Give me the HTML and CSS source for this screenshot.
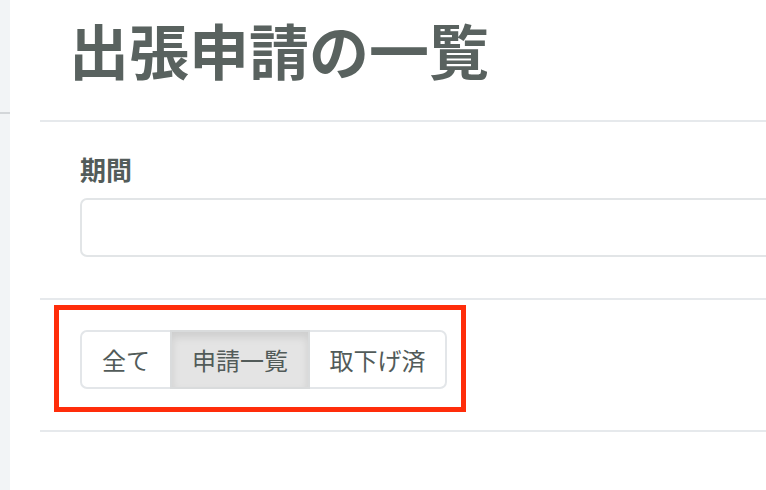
FILE: index.html
```html
<!DOCTYPE html>
<html lang="ja">
<head>
<meta charset="utf-8">
<title>出張申請の一覧</title>
<link rel="stylesheet" href="styles.css">
</head>
<body>
<div class="page">
  <aside class="sidebar"><div class="sidebar-line"></div></aside>
  <main class="main">
    <header class="header">
      <h1 class="title">出張申請の一覧</h1>
    </header>
    <div class="rule"></div>
    <section class="filter">
      <label class="label" for="period">期間</label>
      <input class="input" id="period" type="text">
    </section>
    <div class="rule"></div>
    <section class="tabs-section">
      <div class="highlight">
        <div class="btn-group">
          <button class="btn btn-all" type="button">全て</button>
          <button class="btn btn-active" type="button">申請一覧</button>
          <button class="btn btn-withdrawn" type="button">取下げ済</button>
        </div>
      </div>
    </section>
    <div class="rule"></div>
  </main>
</div>
</body>
</html>
```

FILE: styles.css
```css
html, body {
  margin: 0;
  padding: 0;
  background: #ffffff;
  overflow: hidden;
  font-family: "Noto Sans CJK JP", "Noto Sans", sans-serif;
}

.page {
  display: flex;
  min-height: 490px;
}

.sidebar {
  width: 10px;
  flex: 0 0 10px;
  background: #f2f4f6;
  padding-top: 112px;
}

.sidebar-line {
  height: 2px;
  background: #d3d6d9;
}

.main {
  flex: 1;
  padding-left: 30px;
  overflow: hidden;
}

.header {
  padding: 19px 0 41px 0;
}

.title {
  margin: 0 0 0 29px;
  font-size: 60px;
  line-height: 60px;
  font-weight: 700;
  color: #59625f;
}

.rule {
  height: 2px;
  background: #e6e9ec;
}

.filter {
  padding: 34px 0 41px 40px;
}

.label {
  display: block;
  font-size: 26px;
  line-height: 26px;
  font-weight: 700;
  color: #535c5a;
  margin-bottom: 16px;
}

.input {
  display: block;
  box-sizing: border-box;
  width: calc(100% + 100px);
  height: 59px;
  border: 2px solid #e2e5e7;
  border-radius: 7px;
  background: #fff;
  margin: 0;
  padding: 0 20px;
}

.tabs-section {
  padding: 5px 0 18px 14px;
}

.highlight {
  display: inline-block;
  border: 5px solid #ff2d0a;
  padding: 20px 14px 18px 21px;
}

.btn-group {
  display: flex;
  height: 59px;
}

.btn {
  display: flex;
  align-items: center;
  justify-content: center;
  box-sizing: border-box;
  height: 59px;
  margin: 0;
  padding: 0;
  font-family: "Noto Sans CJK JP", "Noto Sans", sans-serif;
  font-size: 24px;
  color: #525b59;
  background: #ffffff;
  border: 2px solid #e3e6e9;
}

.btn-all {
  width: 90px;
  border-right: none;
  border-radius: 7px 0 0 7px;
}

.btn-active {
  width: 140px;
  background: #e4e4e4;
  border-color: #d9dbdc;
  box-shadow: inset 0 5px 8px rgba(0, 0, 0, 0.10);
}

.btn-withdrawn {
  width: 137px;
  border-left: none;
  border-radius: 0 7px 7px 0;
}
```
